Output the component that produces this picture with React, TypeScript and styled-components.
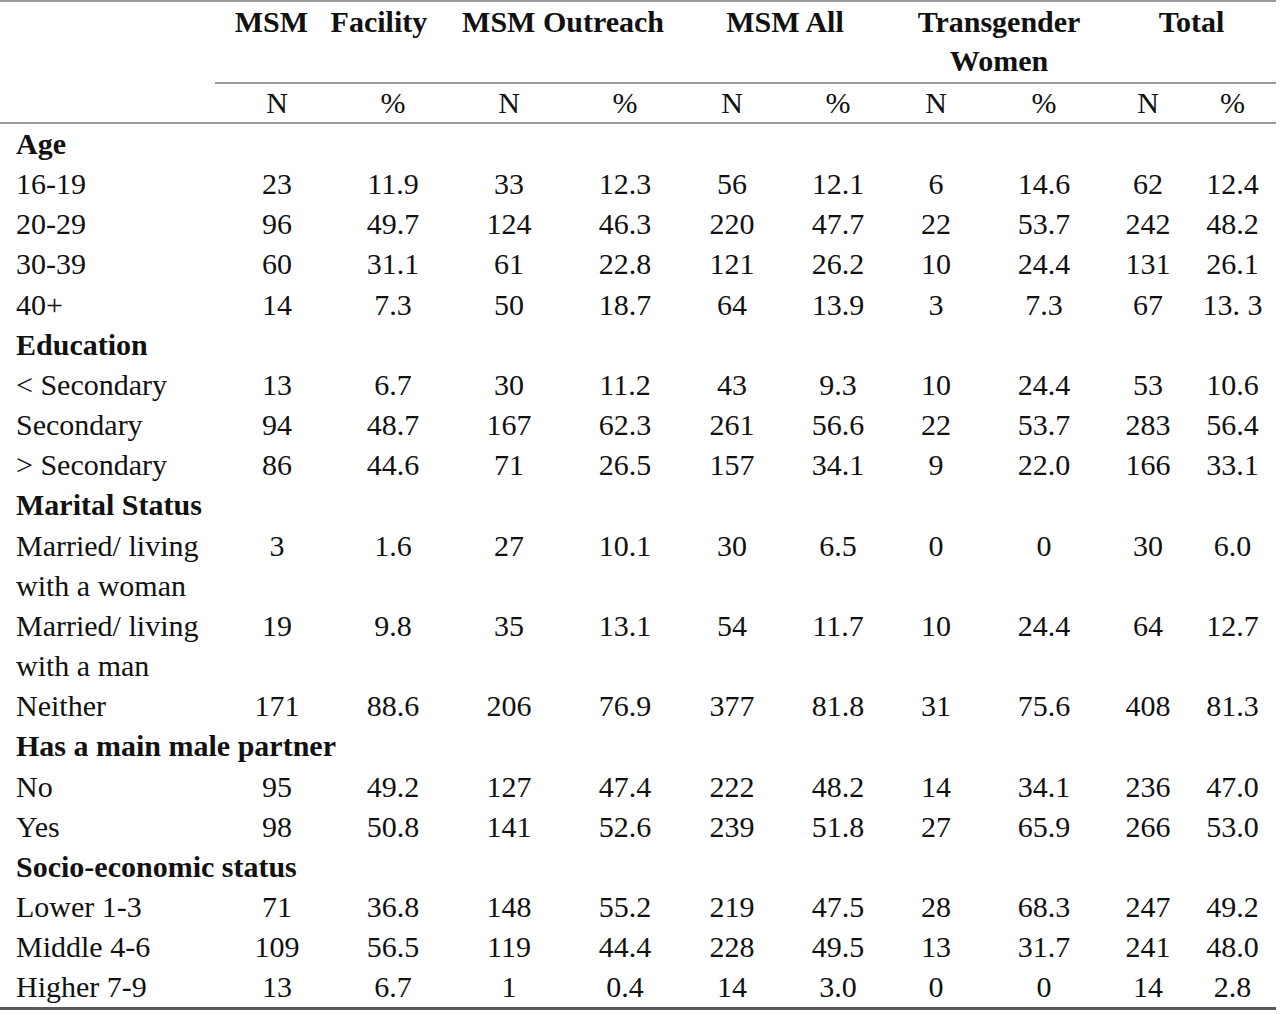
import styled, { createGlobalStyle } from "styled-components";

const GlobalStyle = createGlobalStyle`
  html, body {
    margin: 0;
    padding: 0;
    background: #fff;
  }
  body {
    font-family: "Liberation Serif", "Times New Roman", serif;
    color: #111;
  }
`;

const Page = styled.div`
  width: 1280px;
  height: 1014px;
  overflow: hidden;
  background: #fff;
  padding-top: 0;
  box-sizing: border-box;
`;

const Table = styled.table`
  width: 1276px;
  border-collapse: collapse;
  table-layout: fixed;
  font-size: 30px;
  line-height: 40.15px;
  border-top: 2px solid #9a9a9a;
  border-bottom: 3px solid #5a5a5a;
`;

const GroupHead = styled.th`
  font-weight: bold;
  text-align: center;
  vertical-align: top;
  padding: 0;
  line-height: 39px;
  height: 80px;
  white-space: pre;
`;

const SubRow = styled.tr`
  border-bottom: 2px solid #9a9a9a;
`;

const SubHead = styled.th<{ $ruled?: boolean }>`
  font-weight: normal;
  text-align: center;
  padding: 0;
  line-height: 38px;
  border-top: ${(p) => (p.$ruled ? "2px solid #9a9a9a" : "none")};
`;

const Section = styled.td`
  font-weight: bold;
  padding: 0 0 0 16px;
  white-space: nowrap;
`;

const Label = styled.td`
  padding: 0 0 0 16px;
  vertical-align: top;
`;

const Num = styled.td`
  text-align: center;
  vertical-align: top;
  padding: 0;
`;

const widths = [215, 124, 108, 124, 108, 106, 106, 90, 126, 82, 87];

const groups = [
  { title: "MSM   Facility" },
  { title: "MSM Outreach" },
  { title: "MSM All" },
  { title: "Transgender\nWomen" },
  { title: "Total" },
];

type Row = { label: string; values: string[] };
type Block = { section: string; rows: Row[] };

const data: Block[] = [
  {
    section: "Age",
    rows: [
      { label: "16-19", values: ["23", "11.9", "33", "12.3", "56", "12.1", "6", "14.6", "62", "12.4"] },
      { label: "20-29", values: ["96", "49.7", "124", "46.3", "220", "47.7", "22", "53.7", "242", "48.2"] },
      { label: "30-39", values: ["60", "31.1", "61", "22.8", "121", "26.2", "10", "24.4", "131", "26.1"] },
      { label: "40+", values: ["14", "7.3", "50", "18.7", "64", "13.9", "3", "7.3", "67", "13. 3"] },
    ],
  },
  {
    section: "Education",
    rows: [
      { label: "< Secondary", values: ["13", "6.7", "30", "11.2", "43", "9.3", "10", "24.4", "53", "10.6"] },
      { label: "Secondary", values: ["94", "48.7", "167", "62.3", "261", "56.6", "22", "53.7", "283", "56.4"] },
      { label: "> Secondary", values: ["86", "44.6", "71", "26.5", "157", "34.1", "9", "22.0", "166", "33.1"] },
    ],
  },
  {
    section: "Marital Status",
    rows: [
      { label: "Married/ living with a woman", values: ["3", "1.6", "27", "10.1", "30", "6.5", "0", "0", "30", "6.0"] },
      { label: "Married/ living with a man", values: ["19", "9.8", "35", "13.1", "54", "11.7", "10", "24.4", "64", "12.7"] },
      { label: "Neither", values: ["171", "88.6", "206", "76.9", "377", "81.8", "31", "75.6", "408", "81.3"] },
    ],
  },
  {
    section: "Has a main male partner",
    rows: [
      { label: "No", values: ["95", "49.2", "127", "47.4", "222", "48.2", "14", "34.1", "236", "47.0"] },
      { label: "Yes", values: ["98", "50.8", "141", "52.6", "239", "51.8", "27", "65.9", "266", "53.0"] },
    ],
  },
  {
    section: "Socio-economic status",
    rows: [
      { label: "Lower 1-3", values: ["71", "36.8", "148", "55.2", "219", "47.5", "28", "68.3", "247", "49.2"] },
      { label: "Middle 4-6", values: ["109", "56.5", "119", "44.4", "228", "49.5", "13", "31.7", "241", "48.0"] },
      { label: "Higher 7-9", values: ["13", "6.7", "1", "0.4", "14", "3.0", "0", "0", "14", "2.8"] },
    ],
  },
];

export default function App() {
  return (
    <Page>
      <GlobalStyle />
      <Table>
        <colgroup>
          {widths.map((w, i) => (
            <col key={i} style={{ width: w }} />
          ))}
        </colgroup>
        <thead>
          <tr>
            <GroupHead />
            {groups.map((g) => (
              <GroupHead key={g.title} colSpan={2}>
                {g.title}
              </GroupHead>
            ))}
          </tr>
          <SubRow>
            <SubHead />
            {groups.flatMap((g) => [
              <SubHead key={g.title + "n"} $ruled>
                N
              </SubHead>,
              <SubHead key={g.title + "p"} $ruled>
                %
              </SubHead>,
            ])}
          </SubRow>
        </thead>
        <tbody>
          {data.map((block) => [
            <tr key={block.section}>
              <Section colSpan={11}>{block.section}</Section>
            </tr>,
            ...block.rows.map((r) => (
              <tr key={r.label}>
                <Label>{r.label}</Label>
                {r.values.map((v, i) => (
                  <Num key={i}>{v}</Num>
                ))}
              </tr>
            )),
          ])}
        </tbody>
      </Table>
    </Page>
  );
}
